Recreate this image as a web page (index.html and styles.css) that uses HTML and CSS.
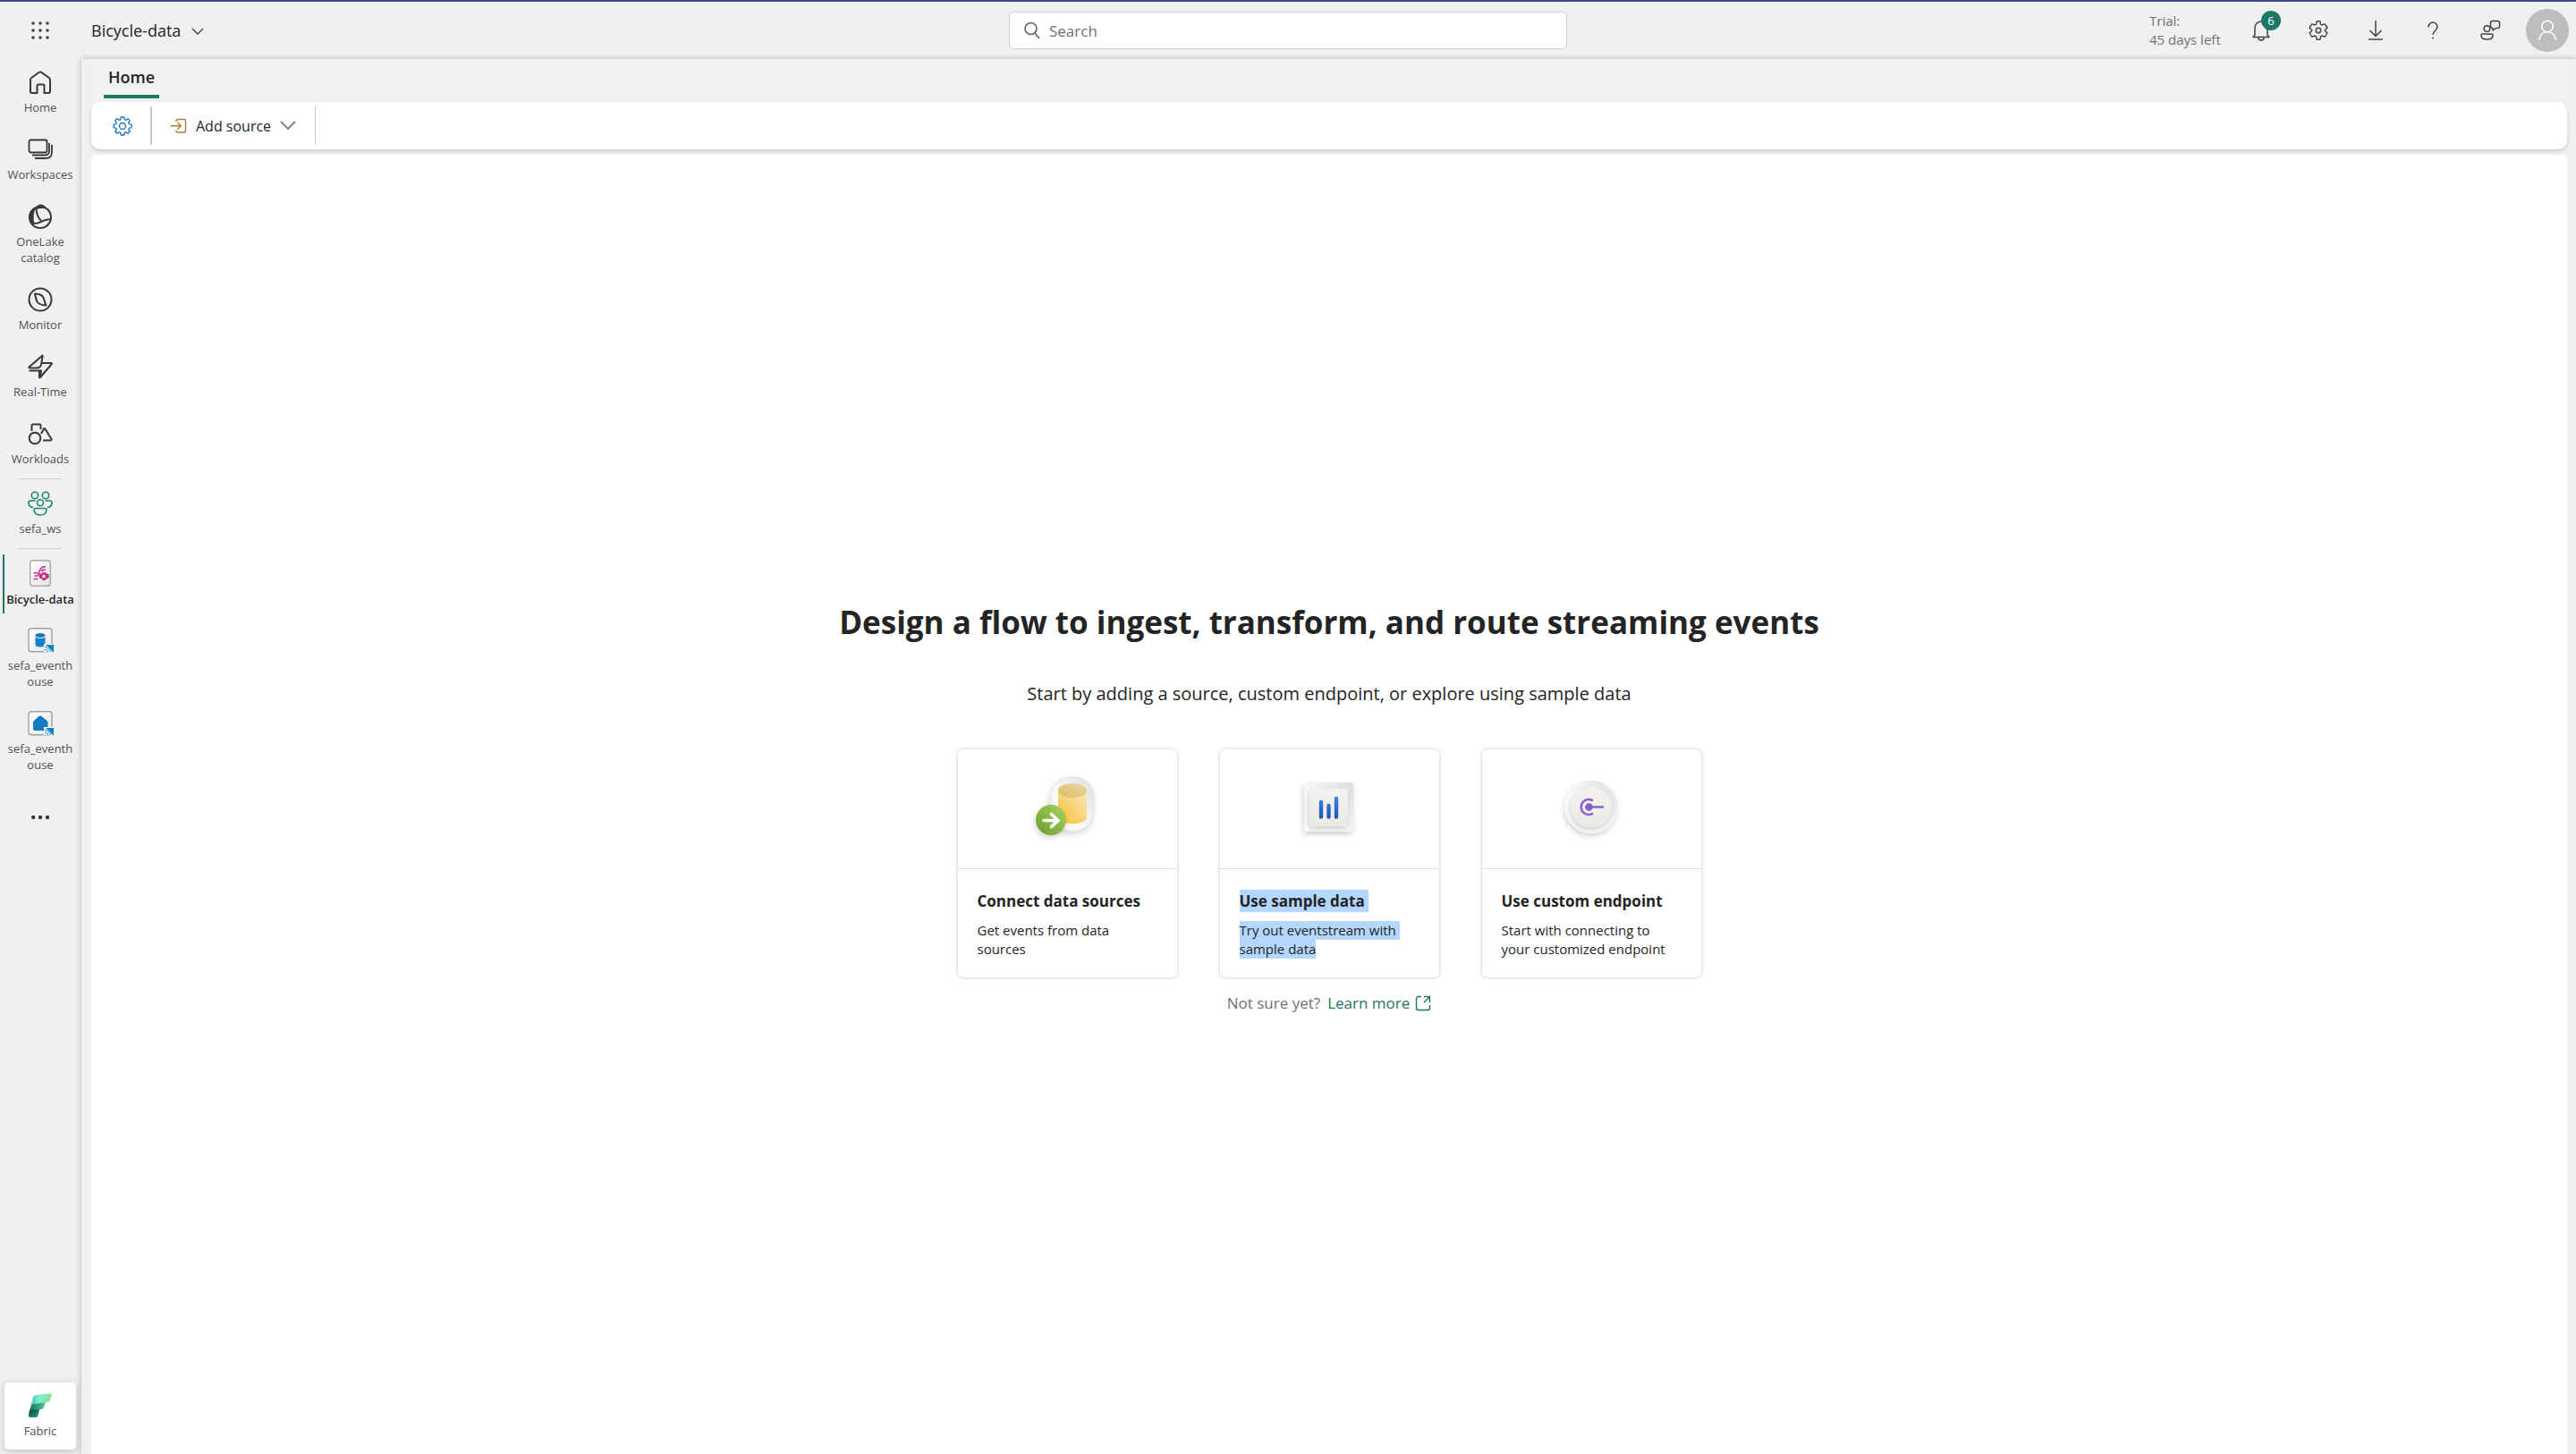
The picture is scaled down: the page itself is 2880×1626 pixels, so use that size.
FILE: index.html
```html
<!DOCTYPE html>
<html lang="en">
<head>
<meta charset="utf-8">
<meta name="viewport" content="width=device-width, initial-scale=1">
<title>Bicycle-data</title>
<link rel="stylesheet" href="styles.css">
</head>
<body>
<div class="app">
  <header class="topbar">
    <div class="topbar-start">
      <button class="launcher" type="button" aria-label="App launcher">
        <svg width="20" height="20" viewBox="0 0 20 20" fill="#424242"><circle cx="2" cy="2" r="1.8"/><circle cx="10" cy="2" r="1.8"/><circle cx="18" cy="2" r="1.8"/><circle cx="2" cy="10" r="1.8"/><circle cx="10" cy="10" r="1.8"/><circle cx="18" cy="10" r="1.8"/><circle cx="2" cy="18" r="1.8"/><circle cx="10" cy="18" r="1.8"/><circle cx="18" cy="18" r="1.8"/></svg>
      </button>
      <button class="item-name" type="button">Bicycle-data
        <svg width="14" height="10" viewBox="0 0 14 10" fill="none" stroke="#424242" stroke-width="1.4"><path d="M1 3l6 6 6-6"/></svg>
      </button>
    </div>
    <label class="search">
      <svg width="18" height="20" viewBox="0 0 18 20" fill="none" stroke="#616161" stroke-width="1.5"><circle cx="7.500" cy="8" r="6.500"/><path d="M12 13l5 6"/></svg>
      <input type="search" placeholder="Search" aria-label="Search">
    </label>
    <div class="topbar-end">
      <p class="trial">Trial:<br>45 days left</p>
      <button class="action" type="button" aria-label="Notifications">
        <svg width="22" height="24" viewBox="0 0 22 24" fill="none" stroke="#424242" stroke-width="1.5" stroke-linejoin="round"><path d="M4 17V9a7 7 0 0 1 14 0v8l2 2.500H2z"/><path d="M8 20a3 3 0 0 0 6 0"/></svg>
        <span class="badge">6</span>
      </button>
      <button class="action" type="button" aria-label="Settings">
        <svg width="24" height="24" viewBox="0 0 20 20" fill="none" stroke="#424242" stroke-width="1.200" stroke-linejoin="round"><path d="M8.300 1.700Q10 1.300 11.700 1.700L12.100 4.300L13.300 5L15.800 4Q17.500 5.700 18.200 7.800L16.200 9.400V10.600L18.200 12.200Q17.500 14.300 15.800 16L13.300 15L12.100 15.700L11.700 18.300Q10 18.700 8.300 18.300L7.900 15.700L6.700 15L4.200 16Q2.500 14.300 1.800 12.200L3.800 10.600V9.400L1.800 7.800Q2.500 5.700 4.200 4L6.700 5L7.900 4.300Z"/><circle cx="10" cy="10" r="2.300"/></svg>
      </button>
      <button class="action" type="button" aria-label="Download">
        <svg width="16" height="22" viewBox="0 0 16 22" fill="none" stroke="#424242" stroke-width="1.500"><path d="M8 0v17M1.500 11L8 17.500 14.500 11M0 21h16"/></svg>
      </button>
      <button class="action" type="button" aria-label="Help">
        <svg width="12" height="20" viewBox="0 0 12 20" fill="none" stroke="#424242" stroke-width="1.500"><path d="M1 6.500V6a5 5 0 0 1 10 0c0 4.500-5 4-5 9"/><circle cx="6" cy="18.500" r="1" fill="#424242" stroke="none"/></svg>
      </button>
      <button class="action" type="button" aria-label="Feedback">
        <svg width="24" height="24" viewBox="0 0 24 24" fill="none" stroke="#424242" stroke-width="1.500" stroke-linejoin="round"><circle cx="8.500" cy="10" r="3.300"/><path d="M3 16h11q1 0 1 1.500c0 3-3 4.500-6.500 4.500S2 20.500 2 17.500Q2 16 3 16z"/><path d="M12.500 3.500q0-2 2-2h6q2 0 2 2v4q0 2-2 2h-2l-3.500 2.500V9.500q-2.500 0-2.500-2z"/></svg>
      </button>
      <button class="avatar" type="button" aria-label="Account">
        <svg width="22" height="24" viewBox="0 0 22 24" fill="none" stroke="#fff" stroke-width="1.500"><circle cx="11" cy="7.500" r="6.300"/><path d="M2 23c0-6 4-9.500 9-9.500s9 3.500 9 9.500"/></svg>
      </button>
    </div>
  </header>

  <nav class="rail" aria-label="Primary">
    <a class="rail-item" href="#"><svg width="28" height="28" viewBox="0 0 28 28" fill="none" stroke="#383838" stroke-width="2" stroke-linejoin="round"><path d="M3 11.500Q3 10 4.200 9L12.500 3Q14 2 15.500 3L23.800 9Q25 10 25 11.500V24Q25 26 23.500 26H18.500V18Q18.500 16.500 17 16.500H12Q10.500 16.500 10.500 18V26H4.500Q3 26 3 24Z"/></svg><span>Home</span></a>
    <a class="rail-item" href="#"><svg width="28" height="28" viewBox="0 0 28 28" fill="none" stroke="#383838" stroke-width="1.800"><rect x="1.500" y="3.500" width="20" height="14" rx="2"/><path d="M24 7v9q0 4.500-4.500 4.500H5"/><path d="M27 9v8q0 7-7 7H8"/></svg><span>Workspaces</span></a>
    <a class="rail-item" href="#"><svg width="28" height="28" viewBox="0 0 28 28" fill="none" stroke="#383838" stroke-width="2"><circle cx="14" cy="15" r="12"/><path d="M7 21.500C13 24 17 16 26 17.500M9.500 5.500C10 12 12 17 16.500 20"/><path fill="#383838" stroke="none" d="M8.500 5.500C6.500 10 6 17 7.500 22L6 24C-1 18 1 8 7 5zM7 7Q10 1 14.500 .5Q19.500 1 21.500 6Q15 3.500 7 7z"/></svg><span>OneLake catalog</span></a>
    <a class="rail-item" href="#"><svg width="28" height="28" viewBox="0 0 28 28" fill="none" stroke="#383838" stroke-width="2" stroke-linejoin="round"><circle cx="14" cy="14" r="12.500"/><path d="M8 7.500C13 7.500 17 9 18 13Q19 17 20.500 20.500Q13 20 10.500 16.500Q9 13 8 7.500z"/></svg><span>Monitor</span></a>
    <a class="rail-item" href="#"><svg width="28" height="28" viewBox="0 0 28 28" fill="none" stroke="#383838" stroke-width="2" stroke-linejoin="round"><path d="M16.500 1.500L1.500 14.500Q1 15.500 3 15.500H10Q14 15.500 15 12L16.500 3zM15 10H26Q27.500 10 26.500 11.500L13.500 26.500 15 18.500H1.500M13 18.500V26.500"/></svg><span>Real-Time</span></a>
    <a class="rail-item" href="#"><svg width="28" height="28" viewBox="0 0 28 28" fill="none" stroke="#383838" stroke-width="2" stroke-linejoin="round"><path d="M4.500 11V5Q4.500 3.500 6 3.500H13Q14.500 3.500 14.500 5V9"/><circle cx="8" cy="19" r="6.300"/><path d="M15 14L18 8.500Q18.700 7.500 19.400 8.500L26.500 20Q27 21.500 25 21.500H17"/></svg><span>Workloads</span></a>
    <hr class="rail-sep">
    <a class="rail-item" href="#"><svg width="28" height="28" viewBox="0 0 28 28" fill="none" stroke="#1f8470" stroke-width="1.600"><circle cx="8" cy="5" r="3.700"/><circle cx="20" cy="5" r="3.700"/><circle cx="14" cy="13.300" r="3.500"/><path d="M8.500 11H3Q1 11 1 13Q1 18 6 18.500M19.500 11H25Q27 11 27 13Q27 18 22 18.500M8.500 19.500H19.500Q21 19.500 21 21Q20.500 27 14 27T7 21Q7 19.500 8.500 19.500z"/></svg><span>sefa_ws</span></a>
    <hr class="rail-sep">
    <a class="rail-item is-current" href="#" aria-current="page"><svg width="28" height="30" viewBox="0 0 28 30" fill="none"><rect x="2.700" y=".7" width="22.600" height="28.600" rx="3" fill="url(#tile)" stroke="#a8a8a8" stroke-width="1.400"/><g stroke="#c9308a" stroke-width="1.500"><path d="M6.500 21.500h5M7.500 18h3Q13 17 13 13Q14 8 20 7.500M15 13Q16 11 20 11M6.500 14.800h5"/></g><path fill="#c9308a" d="M16.500 14h3.500l1 1.500h2l1 2.500-1 3h-2l-1 2h-3.500l-1-2h-2l-1-3 1-2.500h2z"/><circle cx="18" cy="18.500" r="1.700" fill="#fff"/></svg><span>Bicycle-data</span></a>
    <a class="rail-item" href="#"><svg width="30" height="28" viewBox="-1 0 30 28" fill="none"><rect x="1" y=".7" width="26" height="26" rx="3" fill="url(#tile)" stroke="#a0a0a0" stroke-width="1.400"/><path fill="#1480cc" d="M8.500 10.500Q14 13.500 19.500 10.500V19Q19 21.500 14 21.500T8.500 19z"/><ellipse cx="14" cy="8.500" rx="5.500" ry="2.500" fill="#1677bd"/><path fill="#fff" d="M18 18H29v10H18z"/><path fill="#1380c8" d="M20 19H29V28z"/><path d="M19 24q3 0 4 4M19 27l1 1M19 21q4 1 7 6" stroke="#1380c8"/></svg><span>sefa_eventhouse</span></a>
    <a class="rail-item" href="#"><svg width="30" height="28" viewBox="-1 0 30 28" fill="none"><rect x="1" y=".7" width="26" height="26" rx="3" fill="url(#tile)" stroke="#a0a0a0" stroke-width="1.400"/><path fill="#127bc3" d="M12.500 6Q14 5 15.500 6L21.500 11Q22.500 12 22.500 13V20Q22.500 22 20.500 22H8Q6 22 6 20V13Q6 12 7 11z"/><path fill="#fff" d="M18 18H29v10H18z"/><path fill="#1380c8" d="M20 19H29V28z"/><path d="M19 24q3 0 4 4M19 27l1 1M19 21q4 1 7 6" stroke="#1380c8"/></svg><span>sefa_eventhouse</span></a>
    <button class="rail-more" type="button" aria-label="More"><svg width="20" height="6" viewBox="0 0 20 6" fill="#383838"><circle cx="2.200" cy="3" r="2.200"/><circle cx="10" cy="3" r="2.200"/><circle cx="18" cy="3" r="2.200"/></svg></button>
    <a class="rail-item rail-brand" href="#"><svg width="28" height="28" viewBox="0 0 28 28"><path fill="url(#fab1)" d="M6 4Q7 2 10 1.700L27 .5 25 8Q24.500 10 22 10L4 12.500z"/><path fill="url(#fab2)" d="M4 12.500L20 10 18 15.500Q17 18 15 18L2 20z"/><path fill="url(#fab3)" d="M2 18.500L13 18 11.500 25Q11 27 9 27H3Q.5 27 1 24z"/></svg><span>Fabric</span></a>
  </nav>

  <main class="workspace">
    <div class="tabs" role="tablist"><button class="tab" type="button" role="tab" aria-selected="true">Home</button></div>
    <div class="toolbar" role="toolbar" aria-label="Home">
      <button class="tool tool-settings" type="button" aria-label="Eventstream settings">
        <svg width="22" height="22" viewBox="0 0 22 22" fill="none" stroke="#1a73c0" stroke-width="1.300" stroke-linejoin="round"><path d="M9.300 1H12.700L13.300 3.700 14.800 4.300 17 2.700 19.300 5 17.700 7.200 18.300 8.700 21 9.300V12.700L18.300 13.300 17.700 14.800 19.300 17 17 19.300 14.800 17.700 13.300 18.300 12.700 21H9.300L8.700 18.300 7.200 17.700 5 19.300 2.700 17 4.300 14.800 3.700 13.300 1 12.700V9.300L3.700 8.700 4.300 7.200 2.700 5 5 2.700 7.200 4.300 8.700 3.700z"/><circle cx="11" cy="11" r="3.500"/></svg>
      </button>
      <button class="tool tool-source" type="button">
        <svg width="18" height="18" viewBox="0 0 18 18" fill="none" stroke="#a67f3c" stroke-width="1.400"><path d="M6 4V3Q6 1.500 7.500 1.500H15Q16.500 1.500 16.500 3V14.500Q16.500 16 15 16H7.500Q6 16 6 14.500V13.500"/><path d="M0 8.700H11M7.500 5L11.300 8.700 7.500 12.400"/></svg>
        <span>Add source</span>
        <svg width="18" height="11" viewBox="0 0 18 11" fill="none" stroke="#6f7f90" stroke-width="1.800"><path d="M1 1l8 8 8-8"/></svg>
      </button>
    </div>
    <section class="canvas">
      <h1>Design a flow to ingest, transform, and route streaming events</h1>
      <p class="lead">Start by adding a source, custom endpoint, or explore using sample data</p>
      <div class="cards">
        <button class="card" type="button">
          <span class="card-art"><svg width="90" height="90" viewBox="16 0 90 90" fill="none">
            <rect x="43" y="11" width="48" height="60" rx="22" fill="url(#well)" stroke="#e2e2e2" filter="url(#soft)"/>
            <path fill="url(#gold)" d="M51 27V56Q52 63 67 63T83 56V27z"/><ellipse cx="67" cy="26" rx="16" ry="8" fill="url(#goldtop)"/>
            <circle cx="43" cy="59" r="17" fill="url(#green)" filter="url(#soft)"/><path d="M35 59.500H50M43.500 52.500L51 59.500 43.500 66.500" stroke="#fff" stroke-width="3.600" stroke-linecap="round"/></svg></span>
          <span class="card-body"><strong>Connect data sources</strong><span>Get events from data sources</span></span>
        </button>
        <button class="card" type="button">
          <span class="card-art"><svg width="90" height="90" viewBox="0 0 90 90" fill="none">
            <rect x="17" y="17" width="55" height="55" rx="3" fill="url(#well)" filter="url(#soft)"/>
            <rect x="23" y="24" width="43" height="42" rx="4" fill="url(#plate)" filter="url(#soft)"/>
            <path d="M36 39V55.500M44.500 43V55.500M53 35V55.500" stroke="url(#bar)" stroke-width="4.400" stroke-linecap="round"/></svg></span>
          <span class="card-body is-selected"><strong>Use sample data</strong><span>Try out eventstream with</span><span>sample data</span></span>
        </button>
        <button class="card" type="button">
          <span class="card-art"><svg width="90" height="90" viewBox="0 0 90 90" fill="none">
            <circle cx="45" cy="44.500" r="29.500" fill="url(#well)" filter="url(#soft)"/><circle cx="45" cy="44.500" r="22.500" fill="url(#plate)" filter="url(#soft)"/>
            <path d="M47 37.500A8.500 8.500 0 1 0 47 51.500M42 44.500H59" stroke="#9060cf" stroke-width="2.500"/><circle cx="42.500" cy="44.500" r="4.300" fill="#8560c8"/></svg></span>
          <span class="card-body"><strong>Use custom endpoint</strong><span>Start with connecting to your customized endpoint</span></span>
        </button>
      </div>
      <p class="hint">Not sure yet? <a href="#">Learn more <svg width="18" height="18" viewBox="0 0 18 18" fill="none" stroke="#1a7763" stroke-width="1.400"><path d="M7 1.500H4Q1.500 1.500 1.500 4V14Q1.500 16.500 4 16.500H14Q16.500 16.500 16.500 14V11M10 1.500H16.500V8M16.500 1.500L10 8"/></svg></a></p>
    </section>
  </main>
</div>

<svg class="defs" width="0" height="0" aria-hidden="true">
  <defs>
    <linearGradient id="tile" x1="0" y1="0" x2="1" y2="1"><stop stop-color="#fff"/><stop offset="1" stop-color="#e6e6e6"/></linearGradient>
    <linearGradient id="well" x1="0" y1="1" x2="1" y2="0"><stop offset=".4" stop-color="#fbfbfb"/><stop offset="1" stop-color="#dedede"/></linearGradient>
    <linearGradient id="plate" x1="0" y1="0" x2="0" y2="1"><stop stop-color="#f3f2f0"/><stop offset="1" stop-color="#ebe9e4"/></linearGradient>
    <linearGradient id="bar" gradientUnits="userSpaceOnUse" x1="0" y1="35" x2="0" y2="57"><stop stop-color="#3b80e8"/><stop offset="1" stop-color="#1d55ad"/></linearGradient>
    <linearGradient id="gold" x1="0" y1="1" x2="1" y2="0"><stop stop-color="#fdc02f"/><stop offset="1" stop-color="#f6e6bd"/></linearGradient>
    <linearGradient id="goldtop" x1="0" y1="1" x2="1" y2="0"><stop stop-color="#dcb964"/><stop offset="1" stop-color="#ecd8a4"/></linearGradient>
    <linearGradient id="green" x1="0" y1="1" x2="1" y2="0"><stop stop-color="#6b9a31"/><stop offset="1" stop-color="#a8d35c"/></linearGradient>
    <linearGradient id="fab1" x1="0" y1="0" x2="1" y2="0"><stop stop-color="#3fcfab"/><stop offset=".4" stop-color="#7bf0d0"/><stop offset="1" stop-color="#8edd88"/></linearGradient>
    <linearGradient id="fab2" x1="0" y1="0" x2="1" y2="0"><stop stop-color="#1c7562"/><stop offset="1" stop-color="#54c99a"/></linearGradient>
    <linearGradient id="fab3" x1="0" y1="0" x2="1" y2="1"><stop stop-color="#0b4f48"/><stop offset="1" stop-color="#28957b"/></linearGradient>
    <filter id="soft" x="-30%" y="-30%" width="160%" height="160%"><feDropShadow dx="-1" dy="3" stdDeviation="3" flood-color="#000" flood-opacity=".18"/></filter>
  </defs>
</svg>
</body>
</html>
```

FILE: styles.css
```css
* { box-sizing: border-box; }

body {
  margin: 0;
  background: #f0f0f0;
  color: #242424;
  font-family: "Open Sans", "Noto Sans", sans-serif;
  font-size: 17px;
}

button, input { font: inherit; color: inherit; }
button { padding: 0; border: 0; background: none; }
a { color: inherit; text-decoration: none; }
p, h1 { margin: 0; }
svg { display: block; flex: none; }

.app {
  display: grid;
  grid-template: 66px 1fr / 91px 1fr;
  min-height: 100vh;
}

.topbar {
  grid-column: 1 / -1;
  display: grid;
  grid-template-columns: 1fr minmax(200px, 624px) 1fr;
  align-items: center;
  border-top: 2px solid #444489;
}
.topbar-start, .topbar-end { display: flex; align-items: center; }
.topbar-end { justify-content: flex-end; padding-right: 8px; }
.launcher { display: flex; justify-content: center; width: 90px; }
.item-name { display: flex; align-items: center; gap: 12px; padding-left: 12px; font-size: 18px; }

.search {
  display: flex;
  align-items: center;
  gap: 10px;
  height: 42px;
  padding: 0 16px;
  border: 1px solid #d1d1d1;
  border-radius: 5px;
  background: #fff;
}
.search input {
  flex: 1;
  min-width: 0;
  padding: 0;
  border: 0;
  outline: 0;
  background: none;
}
.search input::placeholder { color: #707070; opacity: 1; }

.trial {
  width: 93px;
  color: #707070;
  font-size: 15px;
  line-height: 21px;
}
.action {
  position: relative;
  display: flex;
  align-items: center;
  justify-content: center;
  width: 64px;
  height: 48px;
}
.badge {
  position: absolute;
  top: 2px;
  right: 10px;
  width: 22px;
  border-radius: 50%;
  background: #1c7865;
  color: #fff;
  font-size: 13px;
  line-height: 22px;
}
.avatar {
  display: flex;
  align-items: center;
  justify-content: center;
  width: 48px;
  height: 48px;
  margin-left: 8px;
  border-radius: 50%;
  background: #bdbdbd;
}

.rail {
  display: flex;
  flex-direction: column;
  padding: 0 1px 5px 0;
}
.rail-item {
  display: flex;
  flex-direction: column;
  align-items: center;
  gap: 5px;
  padding: 12px 8px;
  color: #505050;
  font-size: 13px;
  line-height: 18px;
  text-align: center;
}
.rail-item span { max-width: 100%; overflow-wrap: anywhere; }
.rail-item svg { height: 28px; }
.rail-item.is-current {
  height: 66px;
  margin: 5px 0 4px 3px;
  padding: 6px 5px 0 0;
  border-left: 2px solid #1c7865;
  color: #242424;
  font-weight: 600;
}
.rail-item.is-current svg { height: 30px; }
.rail-sep {
  width: 48px;
  height: 1px;
  margin: 1px auto;
  border: 0;
  background: #cfcfcf;
}
.rail-more { display: flex; align-items: center; justify-content: center; height: 75px; }
.rail-brand {
  margin: auto 5px 0;
  border-radius: 5px;
  background: #fff;
  box-shadow: 0 2px 8px rgb(0 0 0 / 20%);
}

.workspace {
  display: flex;
  flex-direction: column;
  padding: 0 10px 0 11px;
  box-shadow: 0 0 6px rgb(0 0 0 / 28%);
}
.tabs { display: flex; height: 48px; padding-left: 14px; background: #f3f1ef; }
.tab {
  height: 44px;
  padding: 0 5px;
  border-bottom: 4px solid #1c7865;
  font-size: 18px;
  font-weight: 600;
}
.toolbar {
  display: flex;
  align-items: center;
  height: 53px;
  margin-bottom: 6px;
  border-radius: 10px;
  background: #fff;
  box-shadow: 0 2px 4px rgb(0 0 0 / 16%);
}
.tool { display: flex; align-items: center; height: 43px; }
.tool-settings { padding: 0 20px 0 24px; border-right: 2px solid #c6c6c6; }
.tool-source { gap: 10px; padding: 0 21px; border-right: 1px solid #c6c6c6; font-size: 16px; }

.canvas {
  flex: 1;
  display: flex;
  flex-direction: column;
  align-items: center;
  justify-content: center;
  padding-top: 4px;
  border-radius: 5px 5px 0 0;
  background: #fff;
}
.canvas h1 { font-size: 35px; font-weight: 700; line-height: 56px; }
.lead { margin-top: 38px; font-size: 20px; line-height: 28px; }

.cards { display: flex; gap: 48px; margin-top: 48px; }
.card {
  display: flex;
  flex-direction: column;
  width: 245px;
  min-height: 255px;
  border-radius: 6px;
  background: #fff;
  box-shadow: 0 0 4px rgb(0 0 0 / 24%);
  text-align: left;
}
.card-art {
  display: flex;
  justify-content: center;
  align-self: stretch;
  height: 134px;
  padding-top: 20px;
  border-bottom: 1px solid #e0e0e0;
}
.card-body {
  display: flex;
  flex-direction: column;
  align-items: flex-start;
  padding: 23px 32px 0 22px;
  font-size: 15px;
  line-height: 21px;
}
.card-body strong { margin-bottom: 10px; font-size: 17px; font-weight: 700; line-height: 25px; white-space: nowrap; }
.is-selected > * { padding-right: 4px; background: #b4d7ff; }
.is-selected > :last-child { padding-right: 0; }

.hint { display: flex; gap: 8px; margin-top: 16px; color: #707070; line-height: 26px; }
.hint a { display: flex; gap: 6px; align-items: center; color: #1a7763; }

.defs { position: absolute; }
```
